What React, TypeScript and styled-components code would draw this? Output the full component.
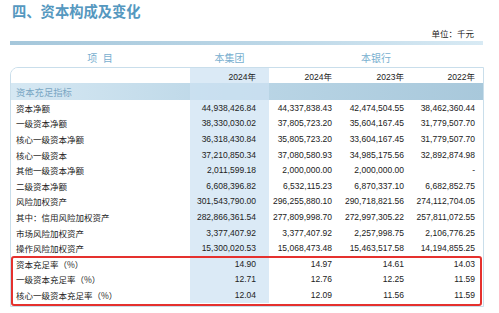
import React from 'react';
import styled, { createGlobalStyle } from 'styled-components';

const GlobalStyle = createGlobalStyle`
  html, body {
    margin: 0;
    padding: 0;
    background: #ffffff;
  }
  body {
    font-family: "Liberation Sans", "Noto Sans CJK SC", sans-serif;
    color: #2b2b2b;
  }
`;

const Page = styled.div`
  width: 499px;
  height: 313px;
  padding-left: 10px;
  box-sizing: border-box;
  overflow: hidden;
`;

const Title = styled.h1`
  margin: 0 0 0 2px;
  padding-top: 2px;
  height: 18px;
  line-height: 18px;
  font-size: 14.3px;
  font-weight: 700;
  color: #5598bf;
  font-family: "Noto Sans CJK SC", "Liberation Sans", sans-serif;
`;

const UnitRow = styled.div`
  width: 473px;
  height: 21px;
  display: flex;
  align-items: flex-end;
  justify-content: flex-end;
  box-sizing: border-box;
  padding: 0 9px 1px 0;
  font-size: 8.5px;
  line-height: 12px;
  color: #222;
`;

const Bar = styled.div`
  width: 473px;
  height: 4px;
  background: linear-gradient(90deg, #a5c7db 0%, #bcd7e7 55%, #d8eaf4 100%);
`;

const HeaderRow = styled.div`
  width: 474px;
  height: 22px;
  display: flex;
  align-items: center;
  padding-top: 2px;
  box-sizing: border-box;
  font-size: 10px;
  color: #78afcf;
`;

const HeaderCell = styled.div<{ $w: number }>`
  width: ${(p) => p.$w}px;
  text-align: center;
`;

const Frame = styled.div`
  width: 474px;
  box-sizing: border-box;
  border: 1px solid #c9deeb;
  border-top-left-radius: 8px;
  padding-bottom: 3px;
  overflow: hidden;
`;

const Row = styled.div<{ $h: number; $kind?: 'year' | 'cat' | 'data' }>`
  display: flex;
  height: ${(p) => p.$h}px;
  align-items: stretch;
  font-size: 8.5px;
  background: ${(p) =>
    p.$kind === 'cat'
      ? 'linear-gradient(90deg, #d6e8f3 0%, #bcd7e7 45%, #a8c8db 100%)'
      : '#ffffff'};
`;

const Cell = styled.div<{ $w: number; $hl?: boolean; $pr?: number }>`
  width: ${(p) => p.$w}px;
  flex: none;
  display: flex;
  align-items: center;
  justify-content: flex-end;
  box-sizing: border-box;
  padding-right: ${(p) => p.$pr ?? 8}px;
  background: ${(p) => (p.$hl ? 'rgba(205, 226, 242, 0.72)' : 'transparent')};
  white-space: nowrap;
  color: #222222;
`;

const Label = styled.div<{ $cat?: boolean }>`
  width: 179px;
  flex: none;
  display: flex;
  align-items: center;
  padding-left: 5px;
  box-sizing: border-box;
  white-space: nowrap;
  font-size: ${(p) => (p.$cat ? '9.3px' : '8.5px')};
  color: ${(p) => (p.$cat ? '#79a6c3' : '#222222')};
  font-family: "Noto Sans CJK SC", "Liberation Sans", sans-serif;
`;

const Highlight = styled.div`
  position: relative;
  &::after {
    content: '';
    position: absolute;
    left: 0;
    right: 1px;
    top: 0;
    bottom: -3px;
    border: 2px solid #e5312e;
    border-radius: 3px;
    pointer-events: none;
  }
`;

type DataRow = [string, string, string, string, string];

const rows: DataRow[] = [
  ['资本净额', '44,938,426.84', '44,337,838.43', '42,474,504.55', '38,462,360.44'],
  ['一级资本净额', '38,330,030.02', '37,805,723.20', '35,604,167.45', '31,779,507.70'],
  ['核心一级资本净额', '36,318,430.84', '35,805,723.20', '33,604,167.45', '31,779,507.70'],
  ['核心一级资本', '37,210,850.34', '37,080,580.93', '34,985,175.56', '32,892,874.98'],
  ['其他一级资本净额', '2,011,599.18', '2,000,000.00', '2,000,000.00', '-'],
  ['二级资本净额', '6,608,396.82', '6,532,115.23', '6,870,337.10', '6,682,852.75'],
  ['风险加权资产', '301,543,790.00', '296,255,880.10', '290,718,821.56', '274,112,704.05'],
  ['其中：信用风险加权资产', '282,866,361.54', '277,809,998.70', '272,997,305.22', '257,811,072.55'],
  ['市场风险加权资产', '3,377,407.92', '3,377,407.92', '2,257,998.75', '2,106,776.25'],
  ['操作风险加权资产', '15,300,020.53', '15,068,473.48', '15,463,517.58', '14,194,855.25'],
];

const ratios: DataRow[] = [
  ['资本充足率（%）', '14.90', '14.97', '14.61', '14.03'],
  ['一级资本充足率（%）', '12.71', '12.76', '12.25', '11.59'],
  ['核心一级资本充足率（%）', '12.04', '12.09', '11.56', '11.59'],
];

const ROW_H = 15.6;

const ValueRow: React.FC<{ row: DataRow }> = ({ row }) => (
  <Row $h={ROW_H} $kind="data">
    <Label>{row[0]}</Label>
    <Cell $w={79} $hl $pr={13}>{row[1]}</Cell>
    <Cell $w={71}>{row[2]}</Cell>
    <Cell $w={72}>{row[3]}</Cell>
    <Cell $w={71}>{row[4]}</Cell>
  </Row>
);

const App: React.FC = () => {
  return (
    <Page>
      <GlobalStyle />
      <Title>四、资本构成及变化</Title>
      <UnitRow>单位：千元</UnitRow>
      <Bar />
      <HeaderRow>
        <HeaderCell $w={180}>项&nbsp;&nbsp;目</HeaderCell>
        <HeaderCell $w={79}>本集团</HeaderCell>
        <HeaderCell $w={214}>本银行</HeaderCell>
      </HeaderRow>
      <Frame>
        <Row $h={15} $kind="year">
          <Label />
          <Cell $w={79} $hl $pr={13}>2024年</Cell>
          <Cell $w={71}>2024年</Cell>
          <Cell $w={72}>2023年</Cell>
          <Cell $w={71}>2022年</Cell>
        </Row>
        <Row $h={17} $kind="cat">
          <Label $cat>资本充足指标</Label>
          <Cell $w={79} $hl />
          <Cell $w={71} />
          <Cell $w={72} />
          <Cell $w={71} />
        </Row>
        {rows.map((r) => (
          <ValueRow key={r[0]} row={r} />
        ))}
        <Highlight>
          {ratios.map((r) => (
            <ValueRow key={r[0]} row={r} />
          ))}
        </Highlight>
      </Frame>
    </Page>
  );
};

export default App;
